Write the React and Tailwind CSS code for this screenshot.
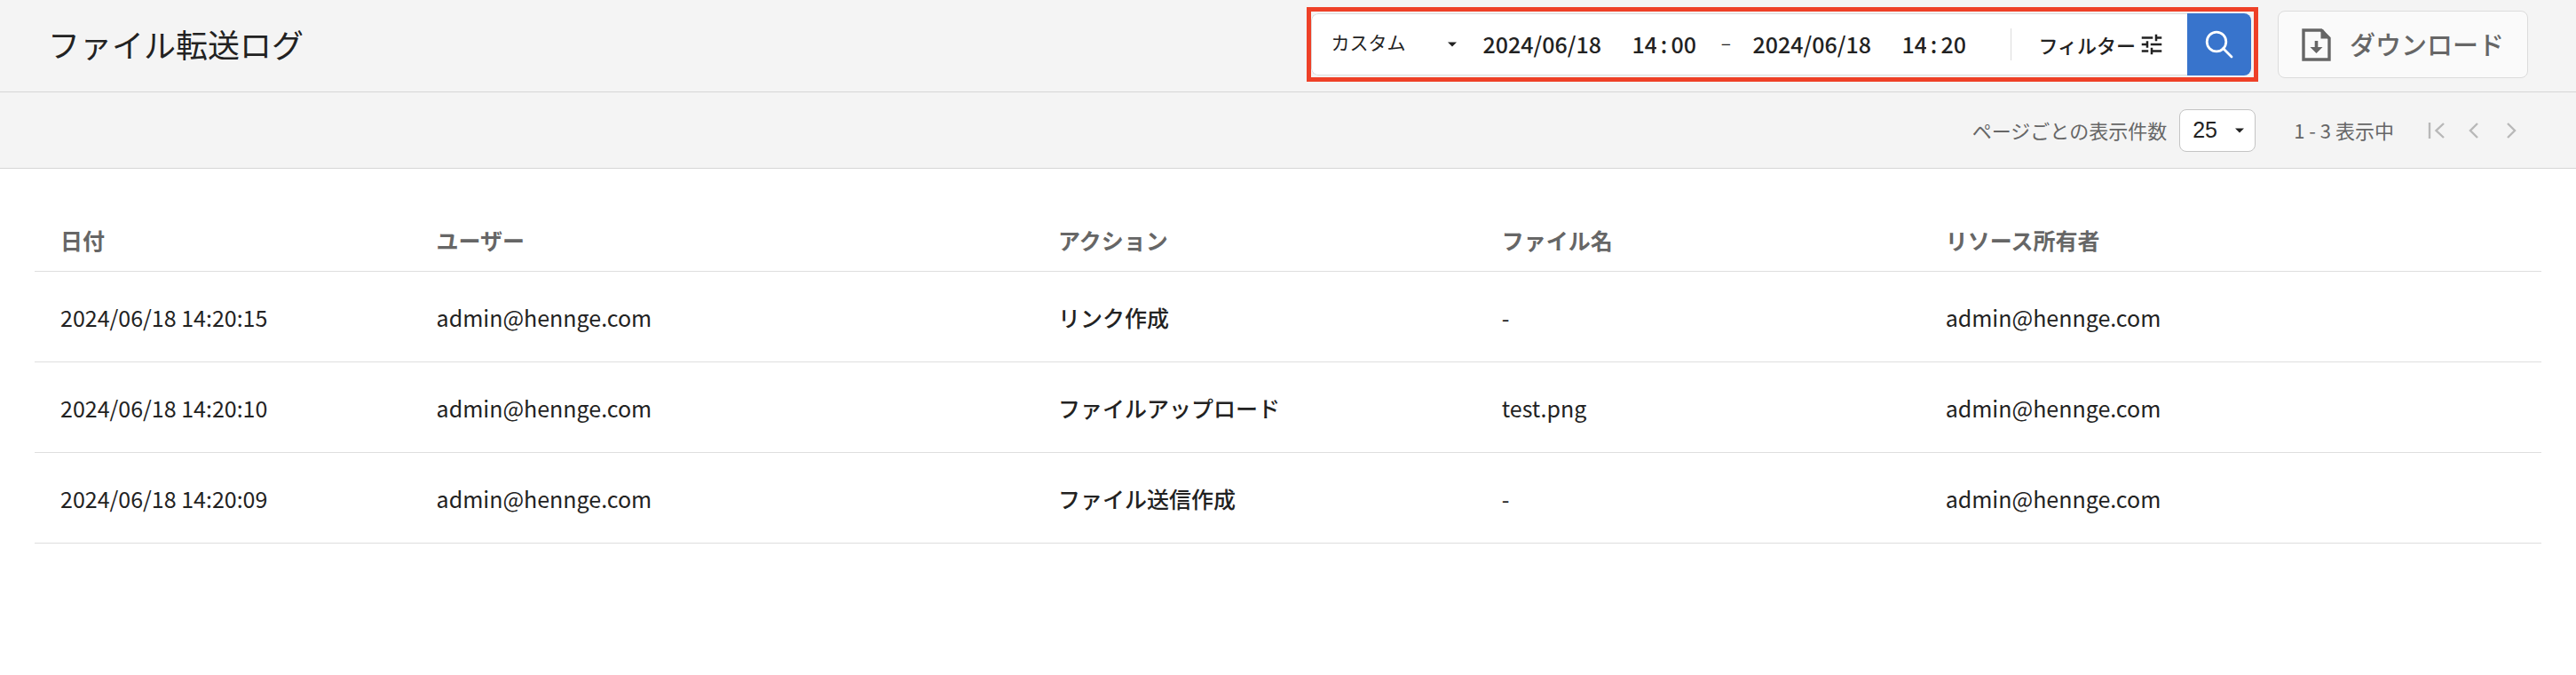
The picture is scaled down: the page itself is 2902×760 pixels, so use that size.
import React, { useState } from "react";
import { MdTune } from "react-icons/md";

const logs = [
    { date: "2024/06/18 14:20:15", user: "admin@hennge.com", action: "リンク作成", file: "-", owner: "admin@hennge.com" },
    { date: "2024/06/18 14:20:10", user: "admin@hennge.com", action: "ファイルアップロード", file: "test.png", owner: "admin@hennge.com" },
    { date: "2024/06/18 14:20:09", user: "admin@hennge.com", action: "ファイル送信作成", file: "-", owner: "admin@hennge.com" },
];

function Caret() {
    return (
        <svg className="pointer-events-none absolute right-0 top-1/2 h-[6px] w-[10px] -translate-y-1/2" viewBox="0 0 10 6" aria-hidden="true">
            <path d="M0 0.5h10L5 5.5z" fill="#222" />
        </svg>
    );
}

function DateTimeField({ label, value, onChange }) {
    const set = (key) => (e) => onChange({ ...value, [key]: e.target.value });

    return (
        <div className="flex items-center text-[25px] font-medium">
            <input
                type="text"
                aria-label={`${label} 日付`}
                value={value.date}
                onChange={set("date")}
                className="mr-8 w-[136px] focus:outline-none"
            />
            <input type="text" aria-label={`${label} 時`} value={value.hour} onChange={set("hour")} className="w-7 focus:outline-none" />
            <span className="w-4 text-center">:</span>
            <input type="text" aria-label={`${label} 分`} value={value.minute} onChange={set("minute")} className="w-7 focus:outline-none" />
        </div>
    );
}

function PageButton({ label, children }) {
    return (
        <button type="button" aria-label={label} className="flex h-11 w-[42px] items-center justify-center">
            <svg className="h-5 w-5" viewBox="0 0 20 20" fill="none" stroke="#b8b8b8" strokeWidth="2.4" aria-hidden="true">
                {children}
            </svg>
        </button>
    );
}

export default function App() {
    const [range, setRange] = useState("custom");
    const [from, setFrom] = useState({ date: "2024/06/18", hour: "14", minute: "00" });
    const [to, setTo] = useState({ date: "2024/06/18", hour: "14", minute: "20" });
    const [perPage, setPerPage] = useState("25");

    return (
        <div className="min-h-screen bg-white font-['Noto_Sans_CJK_JP',sans-serif] text-[#222]">
            {/* Header */}
            <header className="flex h-[104px] items-center justify-between border-b border-[#d6d6d6] bg-[#f4f4f4] px-[54px] pb-[3px]">
                <h1 className="pb-[3px] text-4xl">ファイル転送ログ</h1>

                <div className="flex items-center gap-[22px]">
                    <form className="border-5 border-[#ee4027] py-[2px] pr-[3px]" onSubmit={(e) => e.preventDefault()}>
                        <div className="flex h-[70px] items-stretch overflow-hidden rounded-lg bg-white">
                            <div className="flex items-center rounded-l-lg border border-r-0 border-[#dcdcdc] pl-[21px]">
                                <div className="relative mr-[29px] w-[142px]">
                                    <select
                                        aria-label="期間"
                                        value={range}
                                        onChange={(e) => setRange(e.target.value)}
                                        className="block w-full appearance-none pb-1 text-[21px] focus:outline-none"
                                    >
                                        <option value="custom">カスタム</option>
                                    </select>
                                    <Caret />
                                </div>
                                <DateTimeField label="開始" value={from} onChange={setFrom} />
                                <span className="w-16 pb-1 pl-1 text-center text-[21px]">–</span>
                                <DateTimeField label="終了" value={to} onChange={setTo} />
                                <button type="button" className="ml-[51px] flex h-9 items-center gap-[3px] border-l border-[#dcdcdc] pl-[30px] pr-[25px] text-[22px] font-medium">
                                    フィルター
                                    <MdTune className="size-[30px]" />
                                </button>
                            </div>
                            <button type="submit" aria-label="検索" className="flex w-[72px] items-center justify-center bg-[#3874cc]">
                                <svg className="size-8" viewBox="0 0 32 32" fill="none" stroke="#fff" strokeWidth="2.8" aria-hidden="true">
                                    <circle cx="13" cy="13" r="10.8" />
                                    <path d="M20.5 20.5 30 30" strokeLinecap="round" />
                                </svg>
                            </button>
                        </div>
                    </form>

                    <button type="button" className="flex h-[76px] items-center gap-[21px] rounded-lg border border-[#dcdcdc] bg-[#fafafa] px-[26px] text-[29px] font-medium text-[#666]">
                        <svg className="h-[37px] w-[33px]" viewBox="0 0 33 37" aria-hidden="true">
                            <path d="M2 2h20l9 9v24H2z" fill="none" stroke="#666" strokeWidth="3.4" />
                            <path d="M21.5 1v10.5H32L24 1z" fill="#666" />
                            <path d="M14.7 14h3.6v7h5.2l-7 7-7-7h5.2z" fill="#666" />
                        </svg>
                        ダウンロード
                    </button>
                </div>
            </header>

            {/* Pagination */}
            <div className="flex h-[86px] items-center justify-end border-b border-[#d6d6d6] bg-[#f4f4f4] pr-[52px] text-[22px] text-[#666]">
                <label htmlFor="per-page">ページごとの表示件数</label>
                <div className="ml-[14px] flex h-12 w-[86px] items-center rounded-lg border border-[#c4c4c4] bg-white pl-[14px] pr-3">
                    <div className="relative w-full">
                        <select
                            id="per-page"
                            value={perPage}
                            onChange={(e) => setPerPage(e.target.value)}
                            className="block w-full appearance-none font-['Liberation_Sans',sans-serif] text-[25px] text-[#222] focus:outline-none"
                        >
                            <option value="25">25</option>
                        </select>
                        <Caret />
                    </div>
                </div>
                <p className="ml-[43px] mr-[27px]">1 - 3 表示中</p>
                <nav className="flex" aria-label="ページ">
                    <PageButton label="最初のページ">
                        <path d="M2 1v18M18 2l-8.500 8 8.500 8" />
                    </PageButton>
                    <PageButton label="前のページ">
                        <path d="M14 2l-8 8 8 8" />
                    </PageButton>
                    <PageButton label="次のページ">
                        <path d="M6 2l8 8-8 8" />
                    </PageButton>
                </nav>
            </div>

            {/* Logs */}
            <main className="px-[39px] pt-[47px]">
                <table className="w-full table-fixed text-left text-[25px]">
                    <thead>
                        <tr className="h-[68px] border-b border-[#dedede] text-[#666]">
                            <th className="w-[15%] pl-[29px] font-bold">日付</th>
                            <th className="w-[24.8%] pl-[29px] font-bold">ユーザー</th>
                            <th className="w-[17.7%] pl-[29px] font-bold">アクション</th>
                            <th className="w-[17.7%] pl-[29px] font-bold">ファイル名</th>
                            <th className="pl-[29px] font-bold">リソース所有者</th>
                        </tr>
                    </thead>
                    <tbody>
                        {logs.map((log) => (
                            <tr key={log.date} className="h-[102px] border-b border-[#dedede]">
                                <td className="pl-[29px] pt-1">{log.date}</td>
                                <td className="pl-[29px] pt-1">{log.user}</td>
                                <td className="pl-[29px] pt-1 font-medium">{log.action}</td>
                                <td className="pl-[29px] pt-1">{log.file}</td>
                                <td className="pl-[29px] pt-1">{log.owner}</td>
                            </tr>
                        ))}
                    </tbody>
                </table>
            </main>
        </div>
    );
}
